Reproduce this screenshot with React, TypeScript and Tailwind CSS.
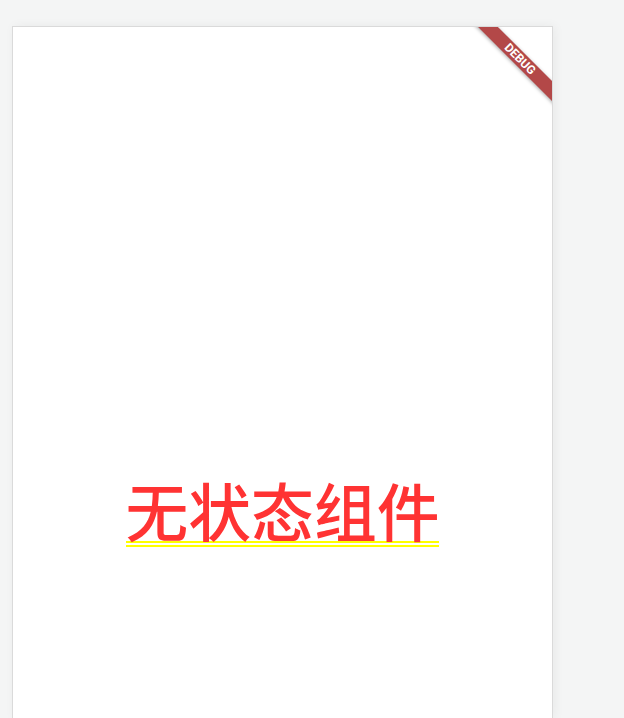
import React from 'react';

const DebugBanner = () => (
  <div className="pointer-events-none absolute right-0 top-0 h-[90px] w-[90px] overflow-hidden">
    <div className="absolute left-[-7px] top-[25px] flex h-[14px] w-[130px] rotate-45 items-center justify-center bg-[#b34848] shadow-[0_1px_4px_rgba(0,0,0,0.35)]">
      <span
        className="text-[12px] font-bold leading-none text-white"
        style={{ fontFamily: '"Roboto", "Liberation Sans", sans-serif' }}
      >
        DEBUG
      </span>
    </div>
  </div>
);

const App = () => {
  return (
    <div className="h-[718px] w-full overflow-hidden bg-[#f4f5f5]">
      <div className="relative ml-[12px] mt-[26px] h-[692px] w-[541px] overflow-hidden border border-b-0 border-[#dadada] bg-white shadow-[2px_0_10px_rgba(0,0,0,0.05)]">
        <DebugBanner />
        <div className="flex justify-center pt-[450px]">
          <span
            className="inline-block border-b-[6px] border-double border-[#ffff00] text-[62.8px] font-medium leading-[64px] text-[#ff3333]"
            style={{ fontFamily: '"Noto Sans CJK SC", "Noto Sans", sans-serif' }}
          >
            无状态组件
          </span>
        </div>
      </div>
    </div>
  );
};

export default App;
